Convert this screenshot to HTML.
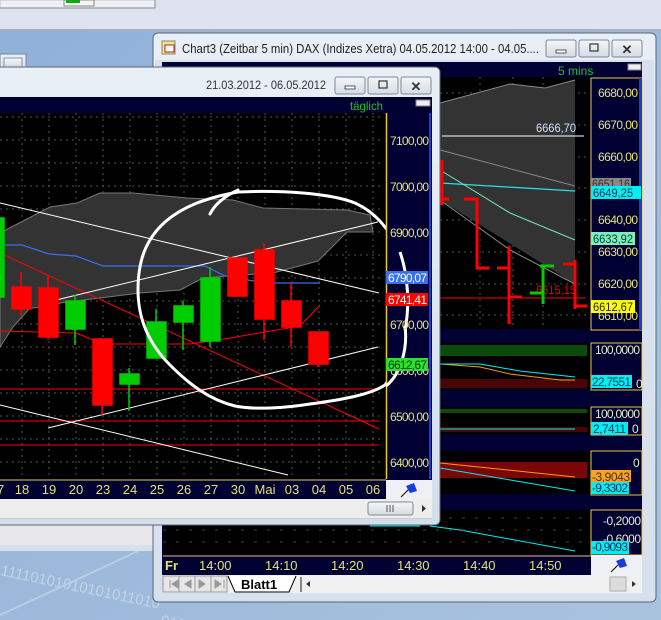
<!DOCTYPE html>
<html><head><meta charset="utf-8"><style>
html,body{margin:0;padding:0;width:661px;height:620px;overflow:hidden;background:#9fb9d9}
svg{display:block}
text{font-family:"Liberation Sans",sans-serif}
</style></head><body>
<svg width="661" height="620" viewBox="0 0 661 620" xmlns="http://www.w3.org/2000/svg">
<defs>
<linearGradient id="desk" x1="0" y1="0" x2="1" y2="1"><stop offset="0" stop-color="#8fb0d8"/><stop offset="1" stop-color="#a9c2de"/></linearGradient>
<linearGradient id="title" x1="0" y1="0" x2="0" y2="1"><stop offset="0" stop-color="#e9eff7"/><stop offset="1" stop-color="#d3deeb"/></linearGradient>
<linearGradient id="btn" x1="0" y1="0" x2="0" y2="1"><stop offset="0" stop-color="#f4f6f9"/><stop offset="1" stop-color="#d5dbe4"/></linearGradient>
</defs>
<rect width="661" height="620" fill="url(#desk)"/>
<rect x="0" y="0" width="661" height="29" fill="#dfe3ef"/>
<rect x="0" y="29" width="661" height="2" fill="#a8b0c0"/>
<rect x="0" y="0" width="155" height="8" fill="#eef0f5" stroke="#999" stroke-width="0.5"/>
<rect x="64" y="0" width="30" height="6" fill="#f5f5f5" stroke="#888"/>
<rect x="66" y="0" width="14" height="3" fill="#1a1"/>
<path d="M0 8H155V0" fill="none" stroke="#888"/>
<text x="0" y="575" fill="#c3d3e6" font-size="15" transform="rotate(12 0 575)">11110101010101011010</text>
<text x="160" y="625" fill="#c3d3e6" font-size="15" transform="rotate(12 160 625)">0101</text>
<path d="M0 615 Q120 560 150 545" stroke="#b9cde3" stroke-width="2" fill="none"/>
<rect x="0" y="54" width="26" height="20" fill="url(#title)" stroke="#7a8797"/>
<rect x="4" y="58" width="18" height="9" fill="url(#btn)" stroke="#8894a4"/>
<rect x="0" y="525" width="153" height="26" fill="#e8e8ea"/>
<rect x="0" y="545" width="153" height="6" fill="#d4e0ec"/>

<!-- BACK WINDOW -->
<rect x="153" y="33" width="503" height="569" rx="5" fill="url(#title)" stroke="#5c6675"/>
<rect x="155" y="60" width="499" height="540" fill="#d6e1ed"/>
<rect x="162" y="41" width="13" height="13" fill="#f4e08a" stroke="#886"/>
<rect x="165" y="45" width="9" height="7" fill="#fff" stroke="#b22"/>
<text x="182" y="53" font-size="13" fill="#222" textLength="357" lengthAdjust="spacingAndGlyphs">Chart3 (Zeitbar 5 min)  DAX (Indizes Xetra) 04.05.2012 14:00 - 04.05....</text>
<rect x="546" y="40" width="30" height="17" rx="2" fill="url(#btn)" stroke="#7d8899"/>
<rect x="556" y="50" width="10" height="3" fill="#fff" stroke="#333" stroke-width="0.8"/>
<rect x="579" y="40" width="30" height="17" rx="2" fill="url(#btn)" stroke="#7d8899"/>
<rect x="590" y="44" width="8" height="7" fill="none" stroke="#333" stroke-width="1.2"/>
<rect x="612" y="40" width="30" height="17" rx="2" fill="url(#btn)" stroke="#7d8899"/>
<text x="627" y="54" font-size="13" fill="#333" text-anchor="middle" font-weight="bold">✕</text>
<rect x="162" y="62" width="480" height="513" fill="#000033"/>
<text x="558" y="75" font-size="12" fill="#1ec51e">5 mins</text>
<rect x="628" y="64" width="13" height="6" fill="#eee" stroke="#888"/>
<rect x="162" y="77" width="428" height="252" fill="#000"/>
<g stroke="#555" stroke-dasharray="2,4">
<path d="M480 77V329M513 77V329M543 77V329"/>
<path d="M440 93H590M440 125H590M440 157H590M440 188H590M440 220H590M440 252H590M440 284H590M440 315H590"/>
</g>
<path d="M440 103L510 84L545 88L575 80V284L440 200Z" fill="#333"/>
<path d="M440 103L510 84L545 88L575 80M440 200L510 250L575 284M440 150L575 186" stroke="#888" fill="none"/>
<path d="M440 183L575 191" stroke="#2de0e8" stroke-width="1.3" fill="none"/>
<path d="M440 170L510 213L575 240" stroke="#6fe6b8" fill="none"/>
<line x1="442" y1="136" x2="584" y2="136" stroke="#fff"/>
<text x="536" y="132" font-size="12" fill="#cfe1ff" textLength="40" lengthAdjust="spacingAndGlyphs">6666,70</text>
<line x1="440" y1="298" x2="585" y2="298" stroke="#f00"/>
<text x="536" y="294" font-size="12" fill="#e00" textLength="40" lengthAdjust="spacingAndGlyphs">6615,15</text>
<g stroke="#f00" stroke-width="3" fill="none">
<path d="M442 160V205M442 199H449M464 199H477V268H489M497 268H509M509 246V324M509 297H522M563 264H575M575 260V309M575 306H587"/>
</g>
<g stroke="#0c0" stroke-width="3" fill="none"><path d="M543 265V304M540 266H554M530 293H543"/></g>
<rect x="591" y="78" width="51" height="252" fill="#000033" stroke="#e6c84a"/>
<rect x="639" y="78" width="3" height="252" fill="#1a3fd0"/>
<g font-size="12" fill="#e8e070" lengthAdjust="spacingAndGlyphs">
<text x="598" y="97" textLength="40">6680,00</text><text x="598" y="129" textLength="40">6670,00</text><text x="598" y="161" textLength="40">6660,00</text>
<text x="598" y="224" textLength="40">6640,00</text><text x="598" y="256" textLength="40">6630,00</text><text x="598" y="288" textLength="40">6620,00</text><text x="598" y="320" textLength="40">6610,00</text>
</g>
<rect x="591" y="178" width="40" height="10" fill="#888"/><text x="592" y="188" font-size="12" fill="#333" textLength="38" lengthAdjust="spacingAndGlyphs">6651,16</text>
<rect x="591" y="186" width="50" height="13" fill="#00f0f0"/><text x="593" y="197" font-size="12" fill="#036" textLength="40" lengthAdjust="spacingAndGlyphs">6649,25</text>
<rect x="591" y="232" width="44" height="13" fill="#80eeb8"/><text x="593" y="243" font-size="12" fill="#044" textLength="40" lengthAdjust="spacingAndGlyphs">6633,92</text>
<rect x="591" y="300" width="44" height="13" fill="#ffff00"/><text x="593" y="311" font-size="12" fill="#222" textLength="40" lengthAdjust="spacingAndGlyphs">6612,67</text>
<rect x="163" y="343" width="428" height="46" fill="#000"/>
<rect x="163" y="407" width="428" height="27" fill="#000"/>
<rect x="163" y="451" width="428" height="43" fill="#000"/>
<rect x="163" y="510" width="428" height="44" fill="#000"/>
<rect x="440" y="345" width="147" height="11" fill="#0b4a0b"/>
<rect x="440" y="379" width="147" height="9" fill="#4a0606"/>
<path d="M440 364L480 367L510 374L560 380L575 380" stroke="#f90" fill="none"/>
<path d="M440 364L480 364L520 371L575 377" stroke="#0ee" fill="none"/>
<rect x="440" y="409" width="147" height="4" fill="#0b4a0b"/>
<rect x="440" y="427" width="147" height="5" fill="#4a0606"/>
<path d="M440 429H575" stroke="#0ee"/>
<rect x="440" y="462" width="147" height="16" fill="#7a0606"/>
<path d="M440 463L575 477" stroke="#f90" fill="none"/>
<path d="M440 468L575 491" stroke="#0ee" fill="none"/>
<path d="M370 526L420 526M430 526L460 530L575 551" stroke="#0ee" fill="none"/>
<g stroke="#444" stroke-dasharray="3,10"><path d="M163 518H590M163 530H590M163 542H590"/></g>
<g fill="#000033" stroke="#e6c84a">
<rect x="591" y="343" width="51" height="47"/><rect x="591" y="407" width="51" height="28"/>
<rect x="591" y="451" width="51" height="44"/><rect x="591" y="510" width="51" height="45"/>
</g>
<g font-size="12" fill="#e8e8c8" lengthAdjust="spacingAndGlyphs">
<text x="595" y="354" textLength="45">100,0000</text><text x="636" y="388">0</text>
<text x="595" y="418" textLength="45">100,0000</text><text x="632" y="433">0</text>
<text x="633" y="467">0</text>
<text x="603" y="525" textLength="38">-0,2000</text><text x="603" y="543" textLength="38">-0,6000</text>
</g>
<g font-size="12" lengthAdjust="spacingAndGlyphs">
<rect x="591" y="375" width="41" height="13" fill="#00f0f0"/><text x="592" y="386" fill="#036" textLength="39">22,7551</text>
<rect x="591" y="422" width="37" height="13" fill="#00f0f0"/><text x="593" y="433" fill="#036" textLength="33">2,7411</text>
<rect x="591" y="470" width="40" height="12" fill="#ffa020"/><text x="592" y="481" fill="#432" textLength="38">-3,9043</text>
<rect x="591" y="482" width="38" height="12" fill="#00f0f0"/><text x="592" y="492" fill="#036" textLength="36">-9,3302</text>
<rect x="591" y="541" width="38" height="13" fill="#00f0f0"/><text x="592" y="551" fill="#036" textLength="36">-0,9093</text>
</g>
<rect x="163" y="555" width="428" height="20" fill="#000033"/>
<line x1="163" y1="556" x2="591" y2="556" stroke="#e6c84a"/>
<rect x="591" y="555" width="51" height="20" fill="#eef0f5"/>
<path d="M611 572L624 559" stroke="#000"/><path d="M616 561L624 558L627 566L620 568Z" fill="#1a3ae0"/>
<g font-size="13" fill="#e8e070"><text x="165" y="570" font-weight="bold">Fr</text>
<text x="199" y="570">14:00</text><text x="265" y="570">14:10</text><text x="331" y="570">14:20</text><text x="397" y="570">14:30</text><text x="463" y="570">14:40</text><text x="529" y="570">14:50</text></g>
<rect x="163" y="575" width="479" height="18" fill="#f0f0f0"/>
<g fill="#e6e6e6" stroke="#999"><rect x="163" y="576" width="16" height="16"/><rect x="179" y="576" width="16" height="16"/><rect x="195" y="576" width="16" height="16"/><rect x="211" y="576" width="16" height="16"/></g>
<path d="M170 580V588M178 580L172 584L178 588Z M191 580L185 584L191 588Z M199 580L205 584L199 588Z M215 580L221 584L215 588ZM224 580V588" fill="#999" stroke="#999"/>
<path d="M228 576L235 592H289L296 576" fill="#fff" stroke="#000"/>
<text x="241" y="589" font-size="13" font-weight="bold" fill="#000">Blatt1</text>
<rect x="300" y="577" width="2" height="15" fill="#888"/>
<rect x="610" y="577" width="16" height="14" fill="#ddd" stroke="#aaa"/>
<path d="M306 584L310 581V587Z M632 581L636 584L632 587Z" fill="#333"/>

<!-- FRONT WINDOW -->
<rect x="-10" y="67" width="450" height="458" rx="5" fill="url(#title)" stroke="#5c6675"/>
<text x="206" y="89" font-size="12" fill="#333" textLength="120" lengthAdjust="spacingAndGlyphs">21.03.2012 - 06.05.2012</text>
<rect x="335" y="77" width="30" height="17" rx="2" fill="url(#btn)" stroke="#7d8899"/>
<rect x="345" y="86" width="10" height="3" fill="#fff" stroke="#333" stroke-width="0.8"/>
<rect x="368" y="77" width="30" height="17" rx="2" fill="url(#btn)" stroke="#7d8899"/>
<rect x="379" y="81" width="8" height="7" fill="none" stroke="#333" stroke-width="1.2"/>
<rect x="401" y="77" width="30" height="17" rx="2" fill="url(#btn)" stroke="#7d8899"/>
<text x="416" y="91" font-size="13" fill="#333" text-anchor="middle" font-weight="bold">✕</text>
<rect x="0" y="97" width="432" height="402" fill="#000033"/>
<text x="350" y="110" font-size="12" fill="#1ec51e" textLength="33" lengthAdjust="spacingAndGlyphs">täglich</text>
<rect x="416" y="100" width="14" height="6" fill="#eee" stroke="#888"/>
<rect x="0" y="113" width="386" height="366" fill="#000"/>
<g stroke="#555" stroke-dasharray="2,4">
<path d="M22 113V478M49 113V478M76 113V478M103 113V478M130 113V478M157 113V478M184 113V478M211 113V478M238 113V478M265 113V478M292 113V478M319 113V478M346 113V478M373 113V478"/>
<path d="M0 117H384M0 140H384M0 163H384M0 186H384M0 209H384M0 232H384M0 255H384M0 278H384M0 301H384M0 324H384M0 347H384M0 370H384M0 393H384M0 416H384M0 439H384M0 462H384"/>
</g>
<path d="M0 233L50 207L77 203L100 193L133 193L187 198L233 200L263 208L347 210L370 215L373 232L347 232L318 261L273 273L227 276L203 278L180 290L140 293L60 303L50 307L30 308L13 327L0 347Z" fill="#333" stroke="#777"/>
<path d="M0 245L22 245L49 254L76 256L103 266L205 266L225 276L265 283L320 283" stroke="#3b6cf0" stroke-width="1.2" fill="none"/>
<g stroke="#f00" stroke-width="1" fill="none">
<path d="M0 389H379M0 421H379M0 445H379M0 253L379 429"/>
<path d="M0 331L76 333L103 344L190 344L230 338L300 326L320 305"/>
</g>
<g stroke="#fff" stroke-width="1" fill="none">
<path d="M0 203L379 293M48 302L378 222M48 428L378 347M0 405L288 475"/>
</g>
<g stroke-width="1.5">
<g stroke="#0c0" fill="#0c0">
<rect x="-5" y="218" width="9" height="79"/>
<path d="M75 295V345"/><rect x="66" y="301" width="19" height="28"/>
<path d="M129 368V411"/><rect x="120" y="374" width="19" height="10"/>
<path d="M156 309V358"/><rect x="147" y="322" width="19" height="36"/>
<path d="M183 301V350"/><rect x="174" y="306" width="19" height="16"/>
<path d="M210 267V347"/><rect x="201" y="278" width="19" height="63"/>
</g>
<g stroke="#f00" fill="#f00">
<path d="M21 272V316"/><rect x="12" y="287" width="19" height="22"/>
<path d="M48 275V340"/><rect x="39" y="288" width="19" height="49"/>
<path d="M102 339V415"/><rect x="93" y="339" width="19" height="66"/>
<path d="M237 257V297"/><rect x="228" y="258" width="19" height="38"/>
<path d="M264 243V340"/><rect x="255" y="250" width="19" height="69"/>
<path d="M291 282V347"/><rect x="282" y="301" width="19" height="26"/>
<path d="M318 332V367"/><rect x="309" y="332" width="19" height="32"/>
</g>
</g>
<!-- hand drawn circle -->
<path d="M210 214C215 204 225 196 238 190" stroke="#fff" stroke-width="3" fill="none" stroke-linecap="round"/>
<path d="M238 192C280 190 330 193 355 203C375 212 390 230 400 252C408 275 410 305 405 330C400 352 395 372 385 385C370 395 340 400 310 404C285 408 255 410 235 406C210 400 190 385 170 365C150 345 138 320 138 290C138 262 145 240 165 222C182 207 205 198 238 192" stroke="#fff" stroke-width="3" fill="none" stroke-linecap="round"/>
<rect x="386" y="113" width="45" height="366" fill="#000033"/>
<line x1="386.5" y1="113" x2="386.5" y2="479" stroke="#e6c84a" stroke-width="1.5"/>
<rect x="429" y="113" width="2" height="366" fill="#1a3fd0"/>
<path d="M405 326C408 350 400 375 386 386" stroke="#fff" stroke-width="3" fill="none"/>
<path d="M400 252C408 275 410 305 405 330" stroke="#fff" stroke-width="3" fill="none"/>
<g font-size="12" fill="#e8e070" lengthAdjust="spacingAndGlyphs">
<text x="390" y="145" textLength="39">7100,00</text><text x="390" y="191" textLength="39">7000,00</text><text x="390" y="237" textLength="39">6900,00</text>
<text x="390" y="329" textLength="39">6700,00</text><text x="390" y="375" textLength="39">6600,00</text><text x="390" y="421" textLength="39">6500,00</text><text x="390" y="467" textLength="39">6400,00</text>
</g>
<g font-size="12" lengthAdjust="spacingAndGlyphs">
<rect x="386" y="271" width="42" height="13" fill="#3a70f0"/><text x="388" y="282" fill="#fff" textLength="39">6790,07</text>
<rect x="386" y="293" width="42" height="13" fill="#f00"/><text x="388" y="304" fill="#fff" textLength="39">6741,41</text>
<rect x="386" y="358" width="42" height="13" fill="#2ee02e"/><text x="388" y="369" fill="#031" textLength="39">6612,67</text>
</g>
<line x1="0" y1="480" x2="386" y2="480" stroke="#e6c84a"/>
<g font-size="13" fill="#e8e070" text-anchor="middle">
<text x="-3" y="494">17</text><text x="22" y="494">18</text><text x="49" y="494">19</text><text x="76" y="494">20</text><text x="103" y="494">23</text><text x="130" y="494">24</text><text x="157" y="494">25</text><text x="184" y="494">26</text><text x="211" y="494">27</text><text x="238" y="494">30</text><text x="265" y="494">Mai</text><text x="292" y="494">03</text><text x="319" y="494">04</text><text x="346" y="494">05</text><text x="373" y="494">06</text>
</g>
<rect x="386" y="480" width="46" height="19" fill="#eef0f5"/>
<path d="M401 497L414 484" stroke="#000"/><path d="M406 486L414 483L417 491L410 493Z" fill="#1a3ae0"/>
<rect x="0" y="499" width="432" height="19" fill="#ededed"/>
<rect x="368" y="502" width="45" height="13" rx="2" fill="url(#btn)" stroke="#888"/>
<path d="M387 505V512M390 505V512M393 505V512" stroke="#555"/>
<path d="M422 505L426 508.5L422 512Z" fill="#333"/>
<rect x="0" y="518" width="432" height="1" fill="#ccc"/>
</svg>
</body></html>
